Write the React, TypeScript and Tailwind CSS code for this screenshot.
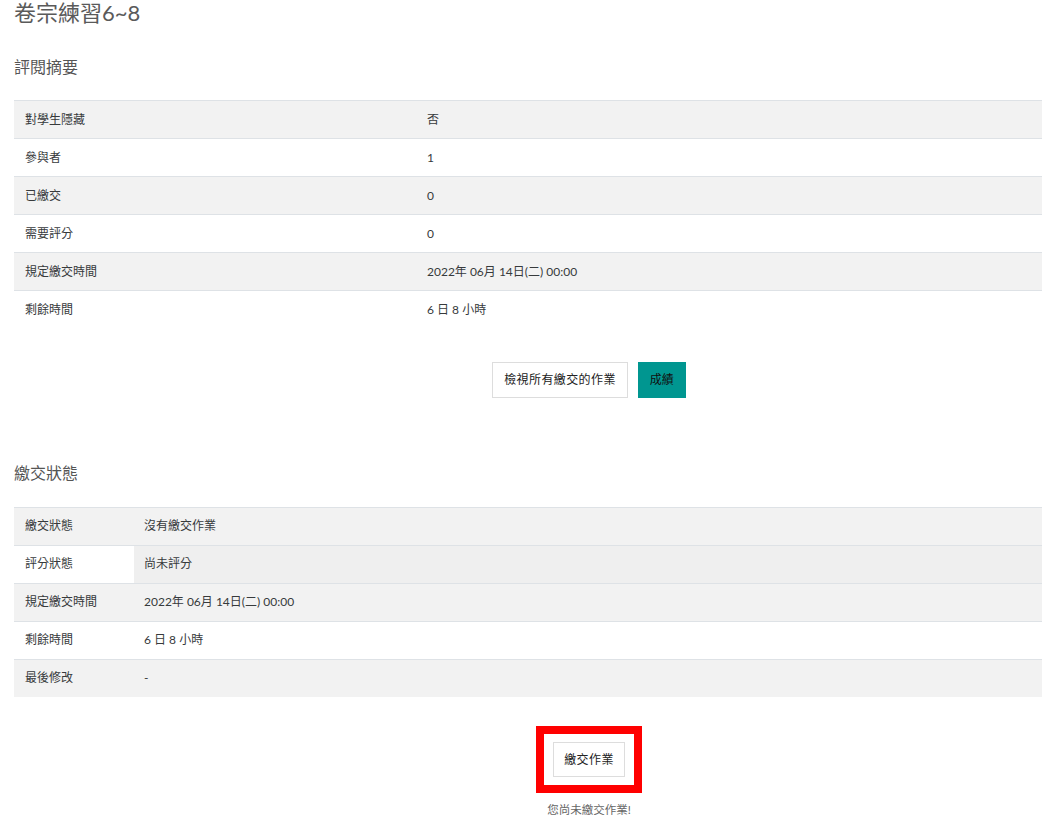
const font = "font-['Lato','Noto_Sans_CJK_TC',sans-serif]";

const summary: [string, string][] = [
    ["對學生隱藏", "否"],
    ["參與者", "1"],
    ["已繳交", "0"],
    ["需要評分", "0"],
    ["規定繳交時間", "2022年 06月 14日(二) 00:00"],
    ["剩餘時間", "6 日 8 小時"],
];

const status: [string, string][] = [
    ["繳交狀態", "沒有繳交作業"],
    ["評分狀態", "尚未評分"],
    ["規定繳交時間", "2022年 06月 14日(二) 00:00"],
    ["剩餘時間", "6 日 8 小時"],
    ["最後修改", "-"],
];

function InfoTable({ rows, labelW, hoverRow }: { rows: [string, string][]; labelW: string; hoverRow?: number }) {
    return (
        <table className="w-full border-collapse text-[12px] text-[#373a3c]">
            <tbody>
                {rows.map(([label, value], i) => {
                    const striped = i % 2 === 0;
                    const hover = i === hoverRow;
                    return (
                        <tr key={label} className={`h-[38px] border-t border-[#dee2e6] ${striped ? "bg-[#f2f2f2]" : "bg-white"}`}>
                            <td className={`${labelW} px-[11px] align-middle`}>{label}</td>
                            <td className={`px-[10px] align-middle ${hover ? "bg-[#efefef]" : ""}`}>{value}</td>
                        </tr>
                    );
                })}
            </tbody>
        </table>
    );
}

export default function App() {
    return (
        <div className={`w-full overflow-hidden bg-white ${font}`}>
            <div className="w-[1150px] ml-[14px] h-[816px]">
                {/* Title */}
                <h2 className="h-[26px] leading-[26px] text-[22px] text-[#5a5a5a] font-normal">卷宗練習6~8</h2>

                {/* 評閱摘要 */}
                <h3 className="mt-[31px] h-[20px] leading-[20px] text-[16px] text-[#555] font-normal">評閱摘要</h3>
                <div className="mt-[23px]">
                    <InfoTable rows={summary} labelW="w-[403px]" />
                </div>

                <div className="mt-[33px] flex justify-center gap-[10px]">
                    <button className="h-[36px] px-[11px] border border-[#dddddd] bg-white text-[12px] text-[#222] tracking-[0.4px]">
                        檢視所有繳交的作業
                    </button>
                    <button className="h-[36px] w-[48px] bg-[#009690] text-[12px] text-[#111]">
                        成績
                    </button>
                </div>

                {/* 繳交狀態 */}
                <h3 className="mt-[65px] h-[20px] leading-[20px] text-[16px] text-[#555] font-normal">繳交狀態</h3>
                <div className="mt-[24px]">
                    <InfoTable rows={status} labelW="w-[120px]" hoverRow={1} />
                </div>

                <div className="mt-[29px] flex flex-col items-center">
                    <div className="border-[8px] border-[#ff0000] px-[9px] py-[8px]">
                        <button className="h-[35px] px-[10px] border border-[#dddddd] bg-white text-[12px] text-[#222] tracking-[0.4px]">
                            繳交作業
                        </button>
                    </div>
                    <p className="mt-[10px] text-[11.5px] leading-[14px] text-[#666]">您尚未繳交作業!</p>
                </div>
            </div>
        </div>
    );
}
